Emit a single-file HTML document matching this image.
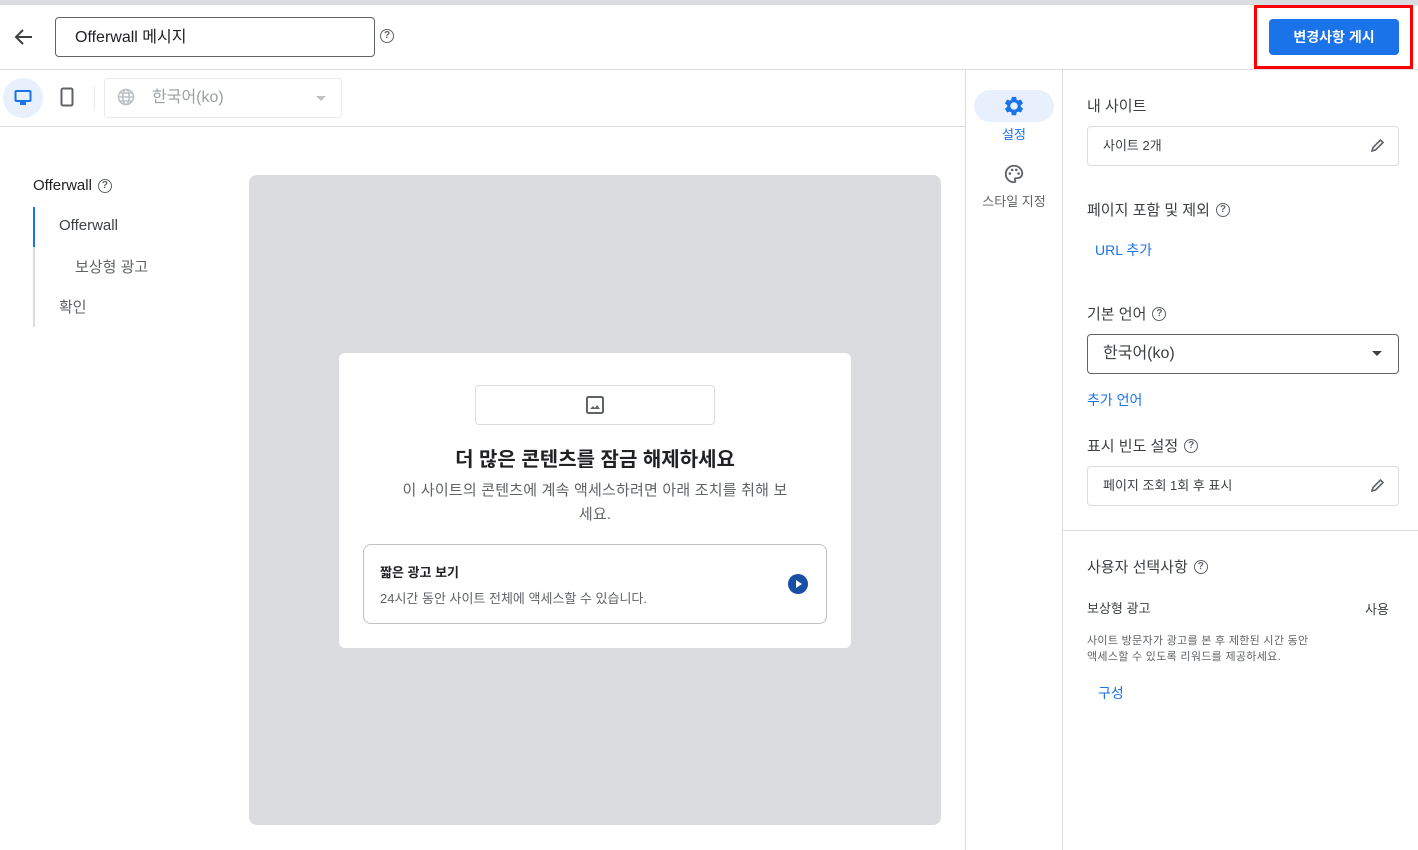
<!DOCTYPE html>
<html><head><meta charset="utf-8"><style>
*{box-sizing:border-box;margin:0;padding:0}
body{width:1418px;height:850px;position:relative;background:#fff;font-family:"Liberation Sans","Noto Sans CJK KR",sans-serif;color:#3c4043;overflow:hidden}
.a{position:absolute}
.h{font-size:15px;color:#3c4043;display:flex;align-items:center;gap:6px}
.q{width:14px;height:14px;border:1.3px solid #5f6368;border-radius:50%;font-size:10px;line-height:11px;text-align:center;color:#5f6368;font-weight:bold}
.box{border:1px solid #dadce0;border-radius:4px}
.blue{color:#1a73e8;font-size:14px}
</style></head><body>
<div class="a" style="left:0;top:0;width:1418px;height:5px;background:#dadce0"></div>
<div class="a" style="left:0;top:69px;width:1418px;height:1px;background:#dadce0"></div>
<svg class="a" style="left:12px;top:27px" width="22" height="20" viewBox="0 0 22 20"><path d="M20 10H4M11 3L4 10l7 7" stroke="#3c4043" stroke-width="2" fill="none"/></svg>
<div class="a" style="left:55px;top:17px;width:320px;height:40px;border:1px solid #5f6368;border-radius:4px;padding:10px 0 0 19px;font-size:16px;line-height:20px;color:#202124">Offerwall 메시지</div>
<div class="a q" style="left:380px;top:29px">?</div>
<div class="a" style="left:1254px;top:5px;width:159px;height:64px;border:3px solid #f00"></div>
<div class="a" style="left:1269px;top:19px;width:130px;height:36px;background:#1a73e8;border-radius:4px;color:#fff;font-size:14px;font-weight:bold;text-align:center;line-height:36px">변경사항 게시</div>
<div class="a" style="left:0;top:126px;width:965px;height:1px;background:#dadce0"></div>
<div class="a" style="left:3px;top:78px;width:40px;height:40px;border-radius:50%;background:#e8f0fe"></div>
<svg class="a" style="left:14px;top:89px" width="18" height="18" viewBox="0 0 18 18"><rect x="1.5" y="2" width="15" height="10" rx="1" fill="none" stroke="#1a73e8" stroke-width="2"/><rect x="6" y="13" width="6" height="3" fill="#1a73e8"/></svg>
<svg class="a" style="left:60px;top:87px" width="14" height="20" viewBox="0 0 14 20"><rect x="1.5" y="1.5" width="11" height="17" rx="1.5" fill="none" stroke="#5f6368" stroke-width="2"/></svg>
<div class="a" style="left:94px;top:86px;width:1px;height:24px;background:#e8eaed"></div>
<div class="a box" style="left:104px;top:78px;width:238px;height:40px;border-color:#e8eaed"></div>
<svg class="a" style="left:117px;top:88px" width="18" height="18" viewBox="0 0 18 18" fill="none" stroke="#bdc1c6" stroke-width="1.6"><circle cx="9" cy="9" r="7.5"/><ellipse cx="9" cy="9" rx="3.2" ry="7.5"/><path d="M1.5 9h15M3 5h12M3 13h12"/></svg>
<div class="a" style="left:152px;top:88px;font-size:16px;line-height:20px;color:#9aa0a6">한국어(ko)</div>
<div class="a" style="left:316px;top:96px;border:5px solid transparent;border-top:5px solid #bdc1c6"></div>
<div class="a h" style="left:33px;top:177px;color:#202124">Offerwall <span class="q">?</span></div>
<div class="a" style="left:33px;top:207px;width:2px;height:120px;background:#dadce0"></div>
<div class="a" style="left:33px;top:207px;width:2px;height:40px;background:#1a73e8"></div>
<div class="a" style="left:59px;top:217px;font-size:15px;color:#3c4043">Offerwall</div>
<div class="a" style="left:75px;top:256px;font-size:15px;color:#5f6368">보상형 광고</div>
<div class="a" style="left:59px;top:296px;font-size:15px;color:#5f6368">확인</div>
<div class="a" style="left:249px;top:175px;width:692px;height:650px;background:#dadce0;border-radius:8px"></div>
<div class="a" style="left:339px;top:353px;width:512px;height:295px;background:#fff;border-radius:6px"></div>
<div class="a box" style="left:475px;top:385px;width:240px;height:40px"></div>
<svg class="a" style="left:586px;top:396px" width="18" height="18" viewBox="0 0 18 18"><rect x="1" y="1" width="16" height="16" rx="1.5" fill="none" stroke="#5f6368" stroke-width="2"/><path d="M4 13l3-3 2 2 2-3 3 4z" fill="#5f6368"/></svg>
<div class="a" style="left:339px;top:443px;width:512px;text-align:center;font-size:20px;font-weight:bold;color:#202124">더 많은 콘텐츠를 잠금 해제하세요</div>
<div class="a" style="left:370px;top:479px;width:450px;text-align:center;font-size:15px;line-height:24px;letter-spacing:0.2px;color:#5f6368">이 사이트의 콘텐츠에 계속 액세스하려면 아래 조치를 취해 보<br>세요.</div>
<div class="a" style="left:363px;top:544px;width:464px;height:80px;border:1px solid #bdc1c6;border-radius:8px"></div>
<div class="a" style="left:380px;top:562px;font-size:13px;font-weight:bold;color:#202124">짧은 광고 보기</div>
<div class="a" style="left:380px;top:588px;font-size:13px;color:#5f6368">24시간 동안 사이트 전체에 액세스할 수 있습니다.</div>
<svg class="a" style="left:788px;top:574px" width="20" height="20" viewBox="0 0 20 20"><circle cx="10" cy="10" r="10" fill="#174ea6"/><path d="M8 6v8l6-4z" fill="#fff"/></svg>
<div class="a" style="left:965px;top:70px;width:1px;height:780px;background:#dadce0"></div>
<div class="a" style="left:1062px;top:70px;width:1px;height:780px;background:#dadce0"></div>
<div class="a" style="left:974px;top:90px;width:80px;height:32px;border-radius:16px;background:#e8f0fe"></div>
<svg class="a" style="left:1003px;top:95px" width="22" height="22" viewBox="0 0 24 24"><path fill="#1a73e8" d="M19.4 13c.04-.3.06-.6.06-1s-.02-.7-.06-1l2.1-1.6c.2-.15.24-.42.12-.64l-2-3.46c-.12-.22-.39-.3-.61-.22l-2.49 1a7.3 7.3 0 0 0-1.73-1l-.38-2.65A.49.49 0 0 0 14 2h-4c-.25 0-.46.18-.49.42l-.38 2.65c-.61.25-1.17.59-1.69 1l-2.49-1c-.23-.09-.49 0-.61.22l-2 3.46c-.13.22-.07.49.12.64L4.57 11c-.04.3-.07.64-.07 1s.03.7.07 1l-2.11 1.65c-.19.15-.24.42-.12.64l2 3.46c.12.22.39.3.61.22l2.49-1c.52.4 1.08.73 1.69 1l.38 2.65c.03.24.24.42.49.42h4c.25 0 .46-.18.49-.42l.38-2.65a7.7 7.7 0 0 0 1.69-1l2.49 1c.23.09.49 0 .61-.22l2-3.46c.12-.22.07-.49-.12-.64zM12 15.5A3.5 3.5 0 1 1 12 8.5a3.5 3.5 0 0 1 0 7z"/><circle cx="12" cy="12" r="3.3" fill="none" stroke="#e8f0fe" stroke-width="1.6"/></svg>
<div class="a" style="left:974px;top:124px;width:80px;text-align:center;font-size:13px;color:#1a73e8">설정</div>
<svg class="a" style="left:1003px;top:163px" width="22" height="22" viewBox="0 0 24 24"><path fill="none" stroke="#5f6368" stroke-width="2" d="M12 3a9 9 0 0 0 0 18c1 0 1.5-.6 1.5-1.3 0-.8-.6-1.1-.6-1.9 0-.8.6-1.3 1.4-1.3H16a5 5 0 0 0 5-5c0-4.6-4-8.5-9-8.5z"/><circle cx="7.5" cy="11.5" r="1.4" fill="#5f6368"/><circle cx="10" cy="7.5" r="1.4" fill="#5f6368"/><circle cx="14.5" cy="7.5" r="1.4" fill="#5f6368"/><circle cx="17" cy="11.5" r="1.4" fill="#5f6368"/></svg>
<div class="a" style="left:966px;top:191px;width:96px;text-align:center;font-size:13px;color:#5f6368">스타일 지정</div>
<div class="a h" style="left:1087px;top:95px">내 사이트</div>
<div class="a box" style="left:1087px;top:126px;width:312px;height:40px;padding:10px 15px;font-size:13px;line-height:18px;color:#3c4043">사이트 2개</div>
<svg class="a" style="left:1370px;top:138px" width="15" height="15" viewBox="0 0 15 15"><path d="M2 13l1-3.5 7.5-7.5 2.5 2.5-7.5 7.5z" fill="none" stroke="#5f6368" stroke-width="1.6"/></svg>
<div class="a h" style="left:1087px;top:199px">페이지 포함 및 제외 <span class="q">?</span></div>
<div class="a blue" style="left:1095px;top:240px">URL 추가</div>
<div class="a h" style="left:1087px;top:303px">기본 언어 <span class="q">?</span></div>
<div class="a" style="left:1087px;top:334px;width:312px;height:40px;border:1px solid #5f6368;border-radius:4px;padding:9px 15px;font-size:16px;line-height:20px;color:#3c4043">한국어(ko)</div>
<div class="a" style="left:1372px;top:351px;border:5px solid transparent;border-top:5px solid #3c4043"></div>
<div class="a blue" style="left:1087px;top:390px">추가 언어</div>
<div class="a h" style="left:1087px;top:435px">표시 빈도 설정 <span class="q">?</span></div>
<div class="a box" style="left:1087px;top:466px;width:312px;height:40px;padding:10px 15px;font-size:13px;line-height:18px;color:#3c4043">페이지 조회 1회 후 표시</div>
<svg class="a" style="left:1370px;top:478px" width="15" height="15" viewBox="0 0 15 15"><path d="M2 13l1-3.5 7.5-7.5 2.5 2.5-7.5 7.5z" fill="none" stroke="#5f6368" stroke-width="1.6"/></svg>
<div class="a" style="left:1063px;top:530px;width:355px;height:1px;background:#dadce0"></div>
<div class="a h" style="left:1087px;top:556px">사용자 선택사항 <span class="q">?</span></div>
<div class="a" style="left:1087px;top:598px;font-size:13px;color:#3c4043">보상형 광고</div>
<div class="a" style="left:1365px;top:599px;font-size:13px;color:#3c4043">사용</div>
<div class="a" style="left:1087px;top:633px;font-size:11px;line-height:16px;color:#5f6368;width:260px;letter-spacing:0.3px">사이트 방문자가 광고를 본 후 제한된 시간 동안<br>액세스할 수 있도록 리워드를 제공하세요.</div>
<div class="a blue" style="left:1098px;top:683px">구성</div>
</body></html>
